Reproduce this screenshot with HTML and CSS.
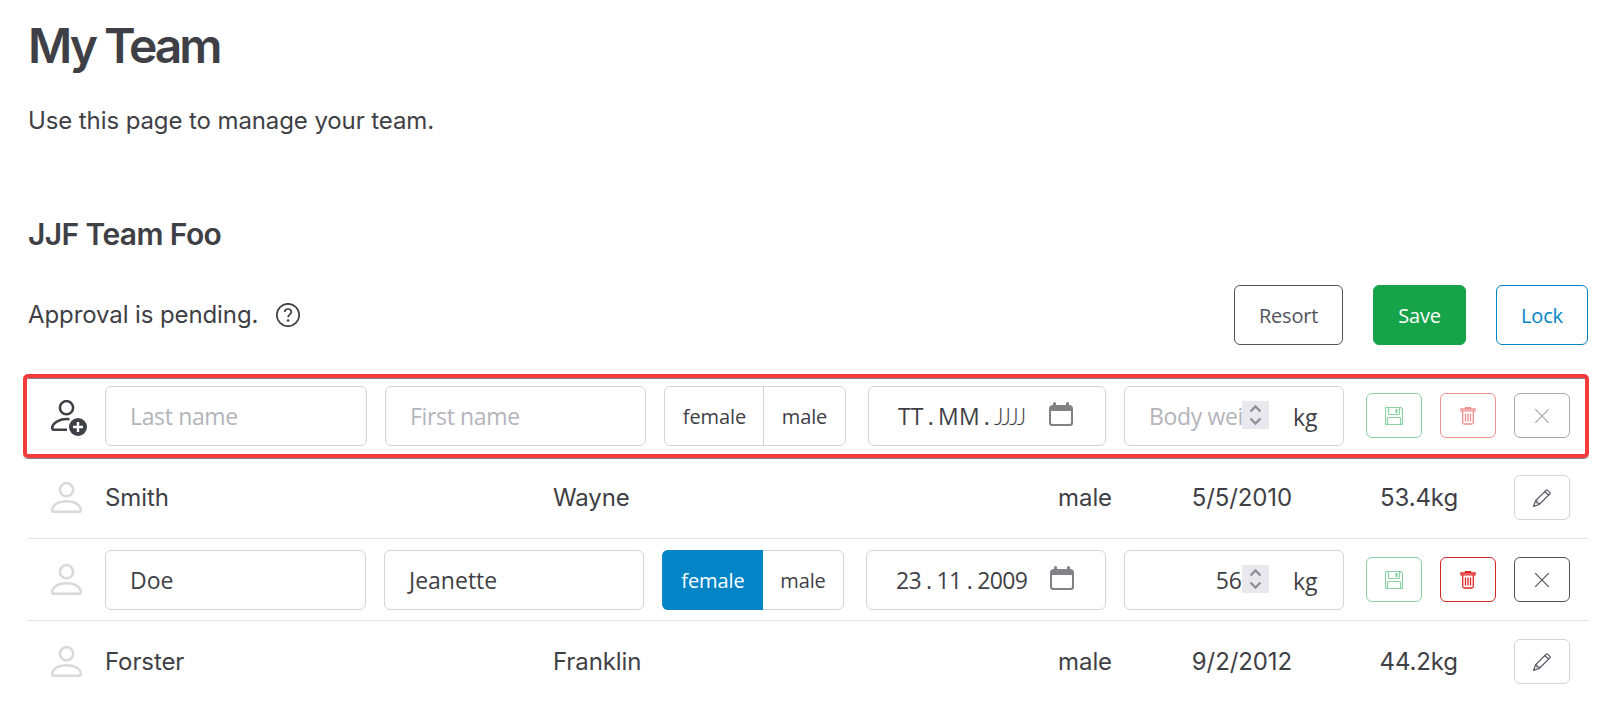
FILE: index.html
```
<!DOCTYPE html>
<html lang="en">
<head>
  <meta charset="UTF-8">
  <meta name="viewport" content="width=device-width, initial-scale=1.0">
  <title>My Team</title>
  <link rel="stylesheet" href="styles.css">
</head>
<body>
  <svg class="sprite">
    <symbol id="person" viewBox="0 0 31 31">
      <circle cx="15.5" cy="7.7" r="6.6"/>
      <path d="M1.2 28.2C1.2 23 7 19.2 15.5 19.2S29.8 23 29.8 28.2Q29.8 29.8 28.2 29.8H2.8Q1.2 29.8 1.2 28.2Z"/>
    </symbol>
    <symbol id="save" viewBox="0 0 18 18">
      <path d="M1.5.5H16L17.5 2V16.5Q17.5 17.5 16.5 17.5H1.5Q.5 17.5 .5 16.5V1.5Q.5.5 1.5.5ZM3.5.5V6.5Q3.5 7.5 4.5 7.5H13.5Q14.5 7.5 14.5 6.5V.5M2.5 17.5V11.5Q2.5 10.5 3.5 10.5H14.5Q15.5 10.5 15.5 11.5V17.5M11 2.5H12V5.5H11Z"/>
    </symbol>
    <symbol id="trash" viewBox="0 0 16 18">
      <path d="M5.5 1.5V.7H10.5V1.5M1 2H15V3.8H1ZM2.7 4V15.5Q2.8 17 4.3 17H11.7Q13.2 17 13.3 15.5V4M5.5 6.5V14.5M8 6.5V14.5M10.5 6.5V14.5"/>
    </symbol>
    <symbol id="close" viewBox="0 0 16 16">
      <path d="M1.2 1.2 14.8 14.8M14.8 1.2 1.2 14.8"/>
    </symbol>
    <symbol id="pencil" viewBox="0 0 18 18">
      <path d="M.7 17.3 2.5 11.8 13.2 1.1Q13.8.5 14.4 1.1L16.9 3.6Q17.5 4.2 16.9 4.8L6.2 15.5ZM11.8 2.5 15.5 6.2M2.5 11.8 4 12.2V14H5.8L6.2 15.5"/>
    </symbol>
    <symbol id="calendar" viewBox="0 0 24 24">
      <path fill="currentColor" stroke="none" fill-rule="evenodd" d="M5.500 0Q7 0 7 1.500V3H17V1.500Q17 0 18.500 0Q20 0 20 1.500V3Q24 3 24 6.500V21Q24 24 21 24H3Q0 24 0 21V6.500Q0 3 4 3V1.500Q4 0 5.500 0ZM2 9V20.500Q2 22 3.500 22H20.500Q22 22 22 20.500V9Z"/>
    </symbol>
  </svg>

  <main class="page">
    <h1>My Team</h1>
    <p class="intro">Use this page to manage your team.</p>
    <h2>JJF Team Foo</h2>

    <div class="toolbar">
      <span>Approval is pending.</span>
      <svg class="help" viewBox="0 0 24 24">
        <circle cx="12" cy="12" r="11.2"/>
        <path d="M8.700 9C8.700 7 10.200 6 12 6S15.300 7.100 15.300 8.900C15.300 11.300 12.100 11.500 12.100 14.300"/>
        <circle class="dot" cx="12.100" cy="17.500" r="1.300"/>
      </svg>
      <div class="actions">
        <button class="btn">Resort</button>
        <button class="btn btn-success">Save</button>
        <button class="btn btn-primary">Lock</button>
      </div>
    </div>

    <div class="team">
      <div class="row row-edit row-new">
        <svg class="person-add" viewBox="0 0 36 36">
          <circle cx="15.500" cy="7.700" r="6.600"/>
          <path d="M18.500 19.300C9 18.200 1.200 22.800 1.200 28.200Q1.200 29.800 2.800 29.800H16"/>
          <circle class="badge" cx="27" cy="27" r="9"/>
          <path class="plus" d="M27 22V32M22 27H32"/>
        </svg>
        <div class="field name"><span class="placeholder">Last name</span></div>
        <div class="field name"><span class="placeholder">First name</span></div>
        <div class="gender"><span class="option">female</span><span class="option">male</span></div>
        <div class="field date date-empty">
          <span>TT</span><span>.</span><span>MM</span><span>.</span><span class="year">JJJJ</span>
          <svg class="calendar"><use href="#calendar"/></svg>
        </div>
        <div class="field weight">
          <span class="value placeholder">Body weight</span>
          <svg class="spinner" viewBox="0 0 27 28"><path d="M8.500 10.500 13.500 5.500 18.500 10.500M8.500 17.500 13.500 22.500 18.500 17.500"/></svg>
          <span class="unit">kg</span>
        </div>
        <div class="tools">
          <button class="tool success disabled"><svg class="i18"><use href="#save"/></svg></button>
          <button class="tool danger disabled"><svg class="i-trash"><use href="#trash"/></svg></button>
          <button class="tool neutral disabled"><svg class="i-close"><use href="#close"/></svg></button>
        </div>
      </div>

      <div class="row row-view">
        <svg class="person"><use href="#person"/></svg>
        <span>Smith</span>
        <span>Wayne</span>
        <span class="right">male</span>
        <span class="right">5/5/2010</span>
        <span class="right">53.4kg</span>
        <button class="tool"><svg class="i18"><use href="#pencil"/></svg></button>
      </div>

      <div class="row row-edit row-member">
        <svg class="person"><use href="#person"/></svg>
        <div class="field name">Doe</div>
        <div class="field name">Jeanette</div>
        <div class="gender"><span class="option checked">female</span><span class="option">male</span></div>
        <div class="field date">
          <span>23</span><span>.</span><span>11</span><span>.</span><span>2009</span>
          <svg class="calendar"><use href="#calendar"/></svg>
        </div>
        <div class="field weight">
          <span class="value">56</span>
          <svg class="spinner" viewBox="0 0 27 28"><path d="M8.500 10.500 13.500 5.500 18.500 10.500M8.500 17.500 13.500 22.500 18.500 17.500"/></svg>
          <span class="unit">kg</span>
        </div>
        <div class="tools">
          <button class="tool success disabled"><svg class="i18"><use href="#save"/></svg></button>
          <button class="tool danger"><svg class="i-trash"><use href="#trash"/></svg></button>
          <button class="tool neutral"><svg class="i-close"><use href="#close"/></svg></button>
        </div>
      </div>

      <div class="row row-view">
        <svg class="person"><use href="#person"/></svg>
        <span>Forster</span>
        <span>Franklin</span>
        <span class="right">male</span>
        <span class="right">9/2/2012</span>
        <span class="right">44.2kg</span>
        <button class="tool"><svg class="i18"><use href="#pencil"/></svg></button>
      </div>
    </div>
  </main>
</body>
</html>
```
FILE: styles.css
```
*,
*::after {
  box-sizing: border-box;
}
body {
  margin: 0;
  background-color: #fff;
  color: #3f3f46;
  font-family: Inter, sans-serif;
  font-size: 24px;
  line-height: 36px;
  letter-spacing: -0.1px;
  overflow: hidden;
}
svg {
  display: block;
  fill: none;
  stroke: currentColor;
}
.sprite {
  display: none;
}
.page {
  padding: 13px 24px 0 28px;
}
h1 {
  margin: 0 0 24px;
  font-size: 48px;
  line-height: 66px;
  font-weight: 600;
  letter-spacing: -3px;
}
.intro {
  margin: 0 0 75px;
}
h2 {
  margin: 0 0 30px;
  font-size: 30px;
  line-height: 41px;
  font-weight: 600;
  letter-spacing: -0.6px;
}
.toolbar {
  display: flex;
  align-items: center;
  width: 1560px;
  height: 60px;
}
.help {
  width: 24px;
  height: 24px;
  margin-left: 18px;
  stroke-width: 1.7;
}
.help .dot {
  fill: currentColor;
  stroke: none;
}
.actions {
  display: flex;
  gap: 30px;
  margin-left: auto;
}
button {
  display: flex;
  align-items: center;
  justify-content: center;
  padding: 0;
  border: 1px solid #d4d4d8;
  border-radius: 6px;
  background-color: #fff;
  color: #52525b;
  cursor: pointer;
}
.btn {
  width: 92px;
  height: 60px;
  padding-top: 1px;
  border-color: #52525b;
  font-family: "Open Sans", sans-serif;
  font-size: 20px;
  letter-spacing: -0.2px;
}
.btn:first-child {
  width: 109px;
}
.btn-success {
  width: 93px;
  border-color: #16a34a;
  background-color: #16a34a;
  color: #fff;
}
.btn-primary {
  border-color: #0284c7;
  color: #0284c7;
}

/* team list */
.team {
  width: 1560px;
  margin-top: 30px;
}
.row {
  display: grid;
  align-items: center;
  height: 82px;
  padding: 1px 18px 0 23px;
  border-bottom: 1px solid #e4e4e7;
}
.row:last-child {
  border-bottom-color: transparent;
}
.row-edit {
  grid-template-columns: 36px 262px 261px 186px 238px 220px 204px;
  column-gap: 18px;
}
.row-member {
  grid-template-columns: 36px 261px 260px 186px 240px 220px 204px;
}
.row-view {
  grid-template-columns: 54px 448px 301px 258px 180px 166px 1fr;
}
.row-view .tool {
  justify-self: end;
  margin-bottom: 1px;
}
.right {
  text-align: right;
}
.row-new {
  position: relative;
}
.row-new::after {
  content: "";
  position: absolute;
  left: -5px;
  top: -1px;
  width: 1566px;
  height: 84px;
  border: 4px solid #f43b3b;
  border-radius: 5px;
  box-shadow: 0 1px 0 #808080, inset 0 1px 0 #808080;
  pointer-events: none;
}
.person {
  width: 31px;
  height: 31px;
  margin-bottom: 1px;
  color: #d9d9da;
  stroke-width: 2.5;
}
.person-add {
  width: 36px;
  height: 36px;
  margin-top: 4px;
  stroke-width: 2.5;
}
.person-add .badge {
  fill: currentColor;
  stroke: none;
}
.person-add .plus {
  stroke: #fff;
  stroke-width: 2.4;
}
.field {
  display: flex;
  align-items: center;
  height: 60px;
  padding: 0 24px;
  border: 1px solid #d4d4d8;
  border-radius: 6px;
  font-family: "Open Sans", sans-serif;
  font-size: 23px;
  letter-spacing: 0;
}
.placeholder {
  color: #b4b4bb;
  letter-spacing: -0.35px;
}
.date {
  padding-left: 29px;
  letter-spacing: -0.6px;
}
.date span {
  margin-right: 5px;
}
.date-empty {
  letter-spacing: 0.2px;
}
.date-empty span {
  margin-right: 4px;
}
.date .year {
  margin-right: 0;
  font-family: Lato, sans-serif;
  font-weight: 300;
  letter-spacing: -1.5px;
}
.calendar {
  width: 24px;
  height: 24px;
  margin: -5px 7px 0 auto;
  color: #828286;
}
.date-empty .calendar {
  margin-right: 8px;
}
.weight .value {
  flex: none;
  width: 93px;
  overflow: hidden;
  white-space: nowrap;
  text-align: right;
}
.weight .placeholder {
  text-align: left;
}
.spinner {
  flex: none;
  width: 27px;
  height: 28px;
  margin-bottom: 2px;
  background-color: #e9e8ed;
  color: #8f8e9c;
  stroke-width: 2.4;
}
.unit {
  margin: 1px 0 0 24px;
}
.gender {
  display: flex;
  width: 182px;
  height: 60px;
  border: 1px solid #d4d4d8;
  border-radius: 6px;
  font-family: "Open Sans", sans-serif;
  font-size: 20px;
  letter-spacing: -0.1px;
}
.option {
  flex: 1;
  padding-top: 12px;
  text-align: center;
}
.option:first-child {
  flex: 0 0 99px;
  padding-left: 1px;
  border-right: 1px solid #d4d4d8;
}
.gender .option.checked {
  flex-basis: 101px;
  margin: -1px 0 -1px -1px;
  padding-top: 13px;
  border-right: none;
  border-radius: 6px 0 0 6px;
  background-color: #0284c7;
  color: #fff;
}
.tools {
  display: flex;
  gap: 18px;
  margin: 0 0 1px 4px;
}
.tool {
  flex: none;
  width: 56px;
  height: 45px;
}
.success {
  border-color: #16a34a;
  color: #16a34a;
}
.danger {
  border-color: #dc2626;
  color: #dc2626;
}
.neutral {
  border-color: #52525b;
}
.disabled {
  opacity: 0.5;
}
.i18 {
  width: 18px;
  height: 18px;
  stroke-width: 1.2;
}
.i-trash {
  width: 16px;
  height: 18px;
  stroke-width: 1.3;
}
.i-close {
  width: 16px;
  height: 16px;
  stroke-width: 1.2;
}
```
